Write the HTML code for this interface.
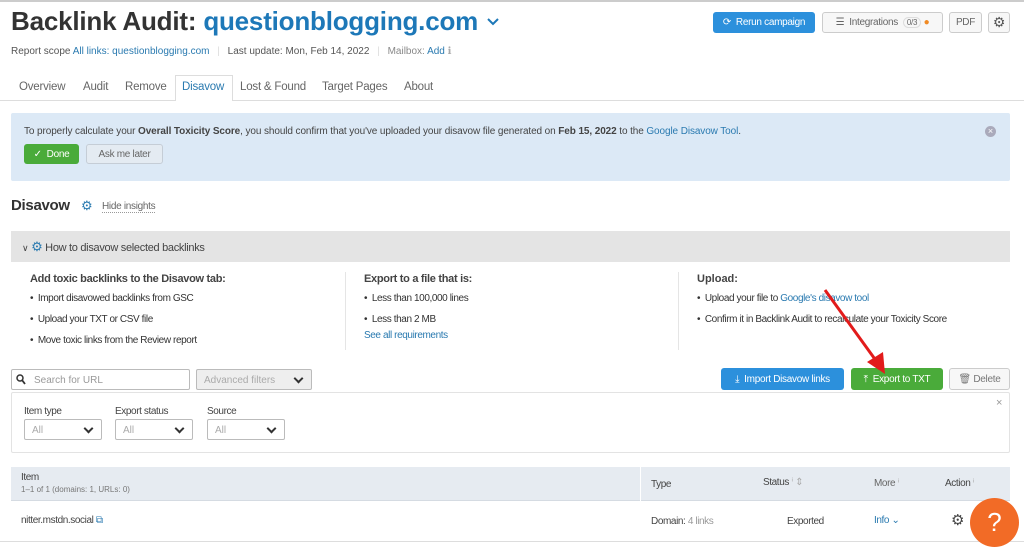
<!DOCTYPE html>
<html><head><style>
*{margin:0;padding:0;box-sizing:border-box}
body{width:1024px;height:543px;overflow:hidden;background:#fff;font-family:"Liberation Sans",sans-serif;color:#333;position:relative}
.a{position:absolute;white-space:nowrap}
.lk{color:#2a7ab0}
.n{font-size:10px;letter-spacing:-0.4px}
.btn{position:absolute;border-radius:3px;font-size:10px;display:flex;align-items:center;justify-content:center;letter-spacing:-0.3px}
.sel{position:absolute;border:1px solid #bbb;border-radius:2px;height:21px;font-size:10px;color:#aaa;padding:5px 7px}
.sel.d:after{content:"";position:absolute;right:9px;top:5px;width:5px;height:5px;border-right:2px solid #333;border-bottom:2px solid #333;transform:rotate(45deg)}
.tab{position:absolute;top:81px;font-size:11.5px;color:#666;letter-spacing:-0.2px}
</style></head><body>
<div style="position:absolute;left:0;top:0;width:1024px;height:2px;background:#ccc"></div>
<div class="a" style="left:11px;top:6px;font-size:26px;font-weight:bold;color:#333;letter-spacing:-0.2px">Backlink Audit: <span style="color:#1d78b8">questionblogging.com</span></div>
<svg class="a" style="left:487px;top:18px" width="12" height="8"><path d="M1 1l5 5 5-5" stroke="#1d78b8" stroke-width="2" fill="none"/></svg>
<div class="a" style="left:11px;top:46px;font-size:10px;color:#555">Report scope <span class="lk">All links: questionblogging.com</span> <span style="color:#ddd;margin:0 5px">|</span> Last update: Mon, Feb 14, 2022 <span style="color:#ddd;margin:0 5px">|</span> <span style="color:#888">Mailbox:</span> <span class="lk">Add</span> <span style="color:#aaa">ℹ</span></div>
<div class="btn" style="left:713px;top:12px;width:102px;height:21px;background:#2c90dc;color:#fff">⟳&nbsp; Rerun campaign</div>
<div class="btn" style="left:822px;top:12px;width:121px;height:21px;border:1px solid #ccc;background:#f7f7f7;color:#666">☰&nbsp; Integrations &nbsp;<span style="border:1px solid #ddd;border-radius:8px;font-size:8px;padding:0 3px">0/3</span>&nbsp;<span style="color:#f08a24">●</span></div>
<div class="btn" style="left:949px;top:12px;width:33px;height:21px;border:1px solid #ccc;background:#f7f7f7;color:#666">PDF</div>
<div class="btn" style="left:988px;top:12px;width:22px;height:21px;border:1px solid #ccc;background:#f7f7f7;color:#555;font-size:14px">⚙</div>
<div class="a" style="left:0;top:100px;width:1024px;height:1px;background:#ddd"></div>
<div class="a" style="left:175px;top:75px;width:58px;height:26px;border:1px solid #ddd;border-bottom:none;background:#fff"></div>
<div class="tab" style="left:19px">Overview</div>
<div class="tab" style="left:83px">Audit</div>
<div class="tab" style="left:125px">Remove</div>
<div class="tab" style="left:182px;color:#2a7ab0">Disavow</div>
<div class="tab" style="left:240px">Lost &amp; Found</div>
<div class="tab" style="left:322px">Target Pages</div>
<div class="tab" style="left:404px">About</div>
<div class="a" style="left:11px;top:113px;width:999px;height:68px;background:#dce9f6;border-radius:2px"></div>
<div class="a" style="left:24px;top:126px;font-size:10px;color:#444;letter-spacing:-0.1px">To properly calculate your <b>Overall Toxicity Score</b>, you should confirm that you've uploaded your disavow file generated on <b>Feb 15, 2022</b> to the <span class="lk">Google Disavow Tool</span>.</div>
<div class="a" style="left:985px;top:126px;width:11px;height:11px;border-radius:50%;background:#aab;color:#fff;font-size:9px;line-height:11px;text-align:center">×</div>
<div class="btn" style="left:24px;top:144px;width:55px;height:20px;background:#4aab3a;color:#fff">✓&nbsp; Done</div>
<div class="btn" style="left:86px;top:144px;width:77px;height:20px;border:1px solid #c5cdd6;background:#e4ebf2;color:#666">Ask me later</div>
<div class="a" style="left:11px;top:197px;font-size:15px;font-weight:bold;color:#333;letter-spacing:-0.3px">Disavow</div>
<div class="a" style="left:81px;top:198px;font-size:13px;color:#2a7ab0">⚙</div>
<div class="a" style="left:102px;top:201px;font-size:10px;color:#666;border-bottom:1px dotted #999;letter-spacing:-0.3px">Hide insights</div>
<div class="a" style="left:11px;top:231px;width:999px;height:31px;background:#e4e4e4"></div>
<div class="a" style="left:22px;top:239px;font-size:11px;color:#444;letter-spacing:-0.3px"><span style="font-size:9px">∨</span> <span style="color:#2a7ab0;font-size:13px">⚙</span> How to disavow selected backlinks</div>
<div class="a" style="left:345px;top:272px;width:1px;height:78px;background:#e5e5e5"></div>
<div class="a" style="left:678px;top:272px;width:1px;height:78px;background:#e5e5e5"></div>
<div class="a" style="left:30px;top:273px;font-size:11px;font-weight:bold;color:#444;letter-spacing:-0.3px">Add toxic backlinks to the Disavow tab:</div>
<div class="a n" style="left:30px;top:293px">• &nbsp;Import disavowed backlinks from GSC</div>
<div class="a n" style="left:30px;top:314px">• &nbsp;Upload your TXT or CSV file</div>
<div class="a n" style="left:30px;top:335px">• &nbsp;Move toxic links from the Review report</div>
<div class="a" style="left:364px;top:273px;font-size:11px;font-weight:bold;color:#444;letter-spacing:-0.3px">Export to a file that is:</div>
<div class="a n" style="left:364px;top:293px">• &nbsp;Less than 100,000 lines</div>
<div class="a n" style="left:364px;top:314px">• &nbsp;Less than 2 MB</div>
<div class="a n lk" style="left:364px;top:330px">See all requirements</div>
<div class="a" style="left:697px;top:273px;font-size:11px;font-weight:bold;color:#444">Upload:</div>
<div class="a n" style="left:697px;top:293px">• &nbsp;Upload your file to <span class="lk">Google's disavow tool</span></div>
<div class="a n" style="left:697px;top:314px">• &nbsp;Confirm it in Backlink Audit to recalculate your Toxicity Score</div>
<div class="sel" style="left:11px;top:369px;width:179px;color:#999;padding-left:22px">Search for URL</div>
<svg class="a" style="left:16px;top:374px" width="10" height="11"><circle cx="4" cy="4" r="3" stroke="#333" stroke-width="1.5" fill="none"/><path d="M6 6l3 4" stroke="#333" stroke-width="1.8"/></svg>
<div class="sel d" style="left:196px;top:369px;width:116px;background:#eee">Advanced filters</div>
<div class="btn" style="left:721px;top:368px;width:123px;height:22px;background:#2c90dc;color:#fff">⤓&nbsp; Import Disavow links</div>
<div class="btn" style="left:851px;top:368px;width:92px;height:22px;background:#4aab3a;color:#fff">⤒&nbsp; Export to TXT</div>
<div class="btn" style="left:949px;top:368px;width:61px;height:22px;border:1px solid #ccc;background:#f7f7f7;color:#777">🗑 Delete</div>
<svg class="a" style="left:815px;top:280px" width="80" height="100"><line x1="10" y1="10" x2="62" y2="82" stroke="#e21b1b" stroke-width="3"/><path d="M52 82 L70 94 L68 72 Z" fill="#e21b1b"/></svg>
<div class="a" style="left:11px;top:392px;width:999px;height:61px;border:1px solid #e3e3e3;border-radius:2px"></div>
<div class="a" style="left:996px;top:397px;font-size:11px;color:#999">×</div>
<div class="a n" style="left:24px;top:406px;color:#444">Item type</div>
<div class="a n" style="left:115px;top:406px;color:#444">Export status</div>
<div class="a n" style="left:207px;top:406px;color:#444">Source</div>
<div class="sel d" style="left:24px;top:419px;width:78px">All</div>
<div class="sel d" style="left:115px;top:419px;width:78px">All</div>
<div class="sel d" style="left:207px;top:419px;width:78px">All</div>
<div class="a" style="left:11px;top:467px;width:999px;height:34px;background:#e6ebf1;border-bottom:1px solid #d5dbe2"></div>
<div class="a" style="left:640px;top:467px;width:1px;height:34px;background:#fff"></div>
<div class="a n" style="left:21px;top:472px;color:#444">Item</div>
<div class="a" style="left:21px;top:485px;font-size:8px;color:#777">1–1 of 1 (domains: 1, URLs: 0)</div>
<div class="a n" style="left:651px;top:479px;color:#444">Type</div>
<div class="a n" style="left:763px;top:477px;color:#444">Status <span style="color:#aaa">ⁱ ⇕</span></div>
<div class="a n" style="left:874px;top:478px;color:#666">More <span style="color:#aaa">ⁱ</span></div>
<div class="a n" style="left:945px;top:478px;color:#444">Action <span style="color:#aaa">ⁱ</span></div>
<div class="a n" style="left:21px;top:515px;color:#444">nitter.mstdn.social <span class="lk">⧉</span></div>
<div class="a n" style="left:651px;top:516px;color:#444">Domain: <span style="color:#999">4 links</span></div>
<div class="a n" style="left:787px;top:516px;color:#444">Exported</div>
<div class="a n lk" style="left:874px;top:515px">Info ⌄</div>
<div class="a" style="left:951px;top:511px;font-size:15px;color:#444">⚙</div>
<div class="a" style="left:0;top:541px;width:1024px;height:1px;background:#ddd"></div>
<div class="a" style="left:970px;top:498px;width:49px;height:49px;border-radius:50%;background:#f26b26;color:#fff;font-size:26px;text-align:center;line-height:49px">?</div>
</body></html>
